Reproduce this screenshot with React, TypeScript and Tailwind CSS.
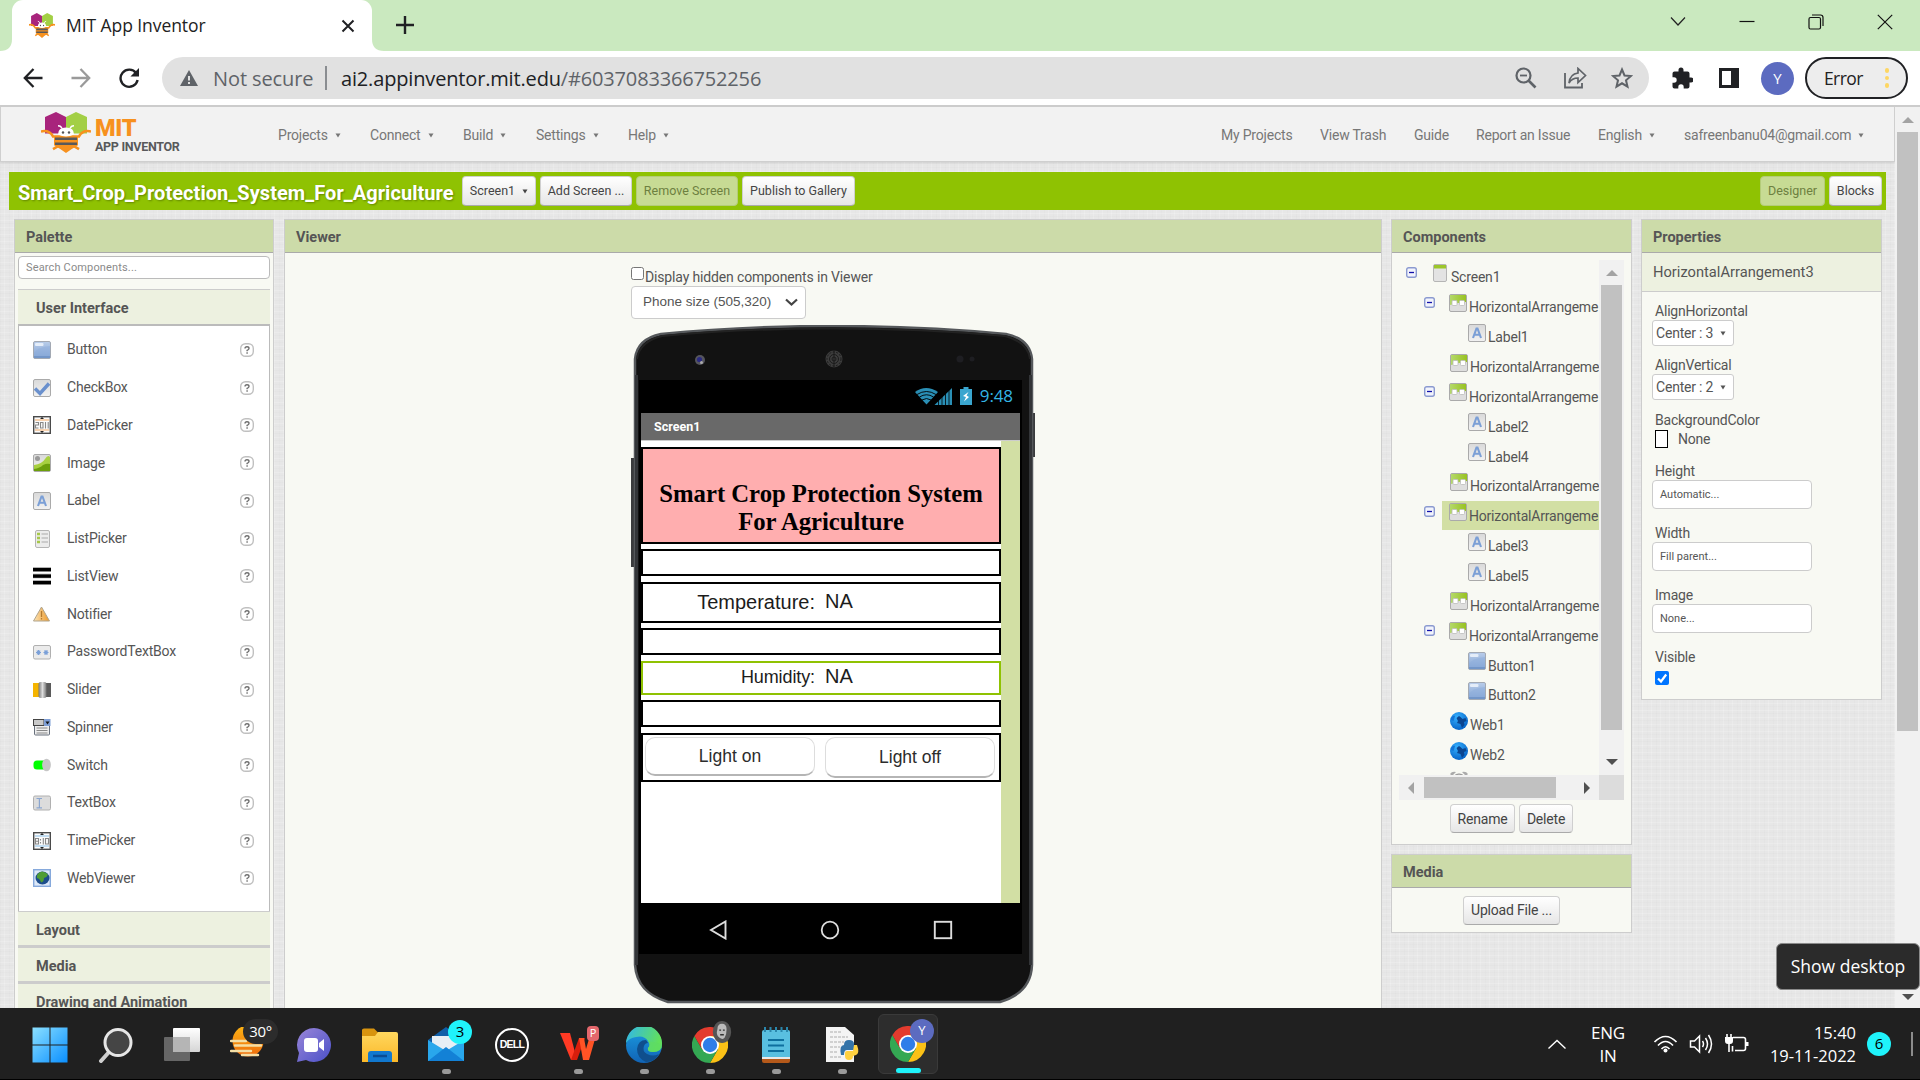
import type { ReactNode } from "react";

const ROBOTO = "font-['Roboto',sans-serif]";
const SEGOE = "font-['Open_Sans',sans-serif]";
const ARIAL = "font-['Liberation_Sans',sans-serif]";

/* ---------- Logos ---------- */

function BeeLogo({ className }: { className: string }) {
  return (
    <svg viewBox="0 0 50 42" preserveAspectRatio="none" className={className}>
      <path d="M4 5 15 0l10 5v17H4z" fill="#a8247c" />
      <path d="M46 5 35 0 25 5v17h21z" fill="#a3cf45" />
      <path d="M0 20q8-2 12 5h26q4-7 12-5M12 38l5-3h16l5 3" stroke="#f7911e" strokeWidth="2.6" fill="none" />
      <path d="M13 25h24v9q-7 4-12 8-5-4-12-8z" fill="#f7911e" />
      <path d="M14 27.5h22M14 32.5h22" stroke="#58595b" strokeWidth="2.6" />
      <path d="M17 23q0-7 8-7t8 7q-8 4-16 0z" fill="#fff" />
      <path d="M21 17q-1-3-4-3M29 17q1-3 4-3" stroke="#fff" strokeWidth="1.5" fill="none" />
      <circle cx="22" cy="21" r="1.2" fill="#555" />
      <circle cx="28" cy="21" r="1.2" fill="#555" />
    </svg>
  );
}

function ChromeLogo() {
  return (
    <svg viewBox="0 0 36 36" className="h-[36px] w-[36px]">
      <path d="M18 9h15.600A18 18 0 0 1 18 36l7.800-13.500z" fill="#fbc116" />
      <path d="M2.400 9A18 18 0 0 0 18 36l7.800-13.500L18 18l-7.800 4.500z" fill="#34a853" />
      <path d="M2.400 9a18 18 0 0 1 31.200 0H18l-7.800 13.500z" fill="#e33b2e" />
      <circle cx="18" cy="18" r="9" fill="#fff" />
      <circle cx="18" cy="18" r="7.2" fill="#2f7de9" />
    </svg>
  );
}

/* ---------- Component icons (18px) ---------- */

function Defs() {
  return (
    <svg className="absolute h-0 w-0">
      <defs>
        <linearGradient id="blue" x1="0" y1="0" x2="0" y2="1">
          <stop offset="0" stopColor="#b9cdea" />
          <stop offset="1" stopColor="#7fa1d3" />
        </linearGradient>
        <linearGradient id="grey" x1="0" y1="0" x2="0" y2="1">
          <stop offset="0" stopColor="#d9d9d9" />
          <stop offset="1" stopColor="#f2f2f2" />
        </linearGradient>
        <linearGradient id="green" x1="0" y1="0" x2="1" y2="0">
          <stop offset="0" stopColor="#b4d96a" />
          <stop offset="1" stopColor="#98c220" />
        </linearGradient>
        <linearGradient id="metal" x1="0" y1="0" x2="1" y2="0">
          <stop offset="0" stopColor="#777" />
          <stop offset=".5" stopColor="#ddd" />
          <stop offset="1" stopColor="#777" />
        </linearGradient>
        <linearGradient id="amber" x1="0" y1="0" x2="1" y2="0">
          <stop offset="0" stopColor="#fbe3b5" />
          <stop offset="1" stopColor="#ee9a2b" />
        </linearGradient>
        <radialGradient id="globe" cx=".4" cy=".3" r=".8">
          <stop offset="0" stopColor="#35b1ff" />
          <stop offset="1" stopColor="#0059c0" />
        </radialGradient>
        <linearGradient id="win" x1="0" y1="0" x2="1" y2="1">
          <stop offset="0" stopColor="#8be0ff" />
          <stop offset="1" stopColor="#0a8fff" />
        </linearGradient>
        <linearGradient id="edgeA" x1="0" y1="0" x2="1" y2="0.3">
          <stop offset="0" stopColor="#2fb5ee" />
          <stop offset="1" stopColor="#62e05c" />
        </linearGradient>
        <linearGradient id="edgeB" x1="0" y1="0" x2="0" y2="1">
          <stop offset="0" stopColor="#1b9de2" />
          <stop offset="1" stopColor="#1163b5" />
        </linearGradient>
        <linearGradient id="teams" x1="0" y1="0" x2="1" y2="1">
          <stop offset="0" stopColor="#9a86d8" />
          <stop offset="1" stopColor="#4a50c8" />
        </linearGradient>
        <linearGradient id="sun" x1="0" y1="0" x2="0" y2="1">
          <stop offset="0" stopColor="#fdb515" />
          <stop offset="1" stopColor="#ee6b0c" />
        </linearGradient>
        <linearGradient id="task" x1="0" y1="0" x2="0" y2="1">
          <stop offset="0" stopColor="#fff" />
          <stop offset="1" stopColor="#d5d5d5" />
        </linearGradient>
        <linearGradient id="folder" x1="0" y1="0" x2="0" y2="1">
          <stop offset="0" stopColor="#ffd75e" />
          <stop offset="1" stopColor="#fbb829" />
        </linearGradient>
      </defs>
    </svg>
  );
}

const frame = <rect x=".5" y=".5" width="17" height="17" rx="1.500" fill="url(#grey)" stroke="#aaa" />;

const icons: Record<string, ReactNode> = {
  Button: (
    <>
      <rect x=".5" y=".5" width="17" height="17" rx="1.5" fill="url(#blue)" stroke="#a3a9b3" />
      <rect x="2" y="2" width="8.500" height="3" rx="1" fill="#e4edf9" />
      <path d="M1 12Q5 6 17 5v10H1z" fill="#8eaedb" opacity=".5" />
      <path d="M1 16h16" stroke="#6f93c6" strokeWidth="1.6" />
    </>
  ),
  CheckBox: (
    <>
      {frame}
      <path d="M2 9.500 7 14.500 16 4.500" fill="none" stroke="#6a90cd" strokeWidth="3.4" />
    </>
  ),
  DatePicker: (
    <>
      <rect x=".7" y=".7" width="16.600" height="16.600" fill="#fbfbfb" stroke="#4a4a4a" strokeWidth="1.400" />
      <path d="M2 4h14M2 14h14" stroke="#f5c396" strokeWidth="1.600" />
      <path d="M9 1 7 3h4zM9 17l-2-2h4z" fill="#222" />
      <path d="M2.500 6.500h3v2.500h-3v3h3M7.500 6.500h2.500v5.500H7.500zM12.500 6v6.500M15.200 6v6.500" fill="none" stroke="#888" strokeWidth="1.100" />
    </>
  ),
  Image: (
    <>
      {frame}
      <path d="M1 11Q9 10 12 5t5-2v14H1z" fill="#a8d040" />
      <path d="M1 15q6-1 9-4 4-2 7-1v7H1z" fill="#6c9f0b" />
      <circle cx="4.500" cy="4.500" r="2.500" fill="#999" />
    </>
  ),
  Label: (
    <>
      {frame}
      <path d="M5 14 8.500 4.500h1L13 14M6.300 10.800h5.400" fill="none" stroke="#7b9fd6" strokeWidth="2.100" />
    </>
  ),
  ListPicker: (
    <>
      <rect x="2.500" y=".5" width="14" height="17" rx="1.500" fill="#ececec" stroke="#b5b5b5" />
      <path d="M4 4h3M4 8h3M4 12h3" stroke="#a6c84a" strokeWidth="2.300" />
      <path d="M8.500 4H15M8.500 8H15M8.500 12H15" stroke="#aaa" strokeWidth="1.100" />
    </>
  ),
  ListView: (
    <>
      <path d="M0 2.500h18M0 9h18M0 15.500h18" stroke="#999" strokeWidth="4.600" />
      <path d="M0 2.700h18M0 9.200h18M0 15.700h18" stroke="#000" strokeWidth="3.200" />
    </>
  ),
  Notifier: (
    <>
      <path d="M8.500 2 16.500 16h-16z" fill="url(#amber)" stroke="#b0a48c" strokeWidth="1" />
      <path d="M8.500 6v6M8.500 13v1.500" stroke="#b57b2f" strokeWidth="1.300" />
    </>
  ),
  PasswordTextBox: (
    <>
      <rect x=".5" y="2.500" width="17" height="13.500" rx="1.500" fill="#ebebeb" stroke="#b0b0b0" />
      <path d="M3 9.500h5M5.500 7v5M3.800 7.700l3.400 3.600M7.200 7.700l-3.400 3.600M10.500 9.500h5M13 7v5M11.300 7.700l3.400 3.600M14.700 7.700l-3.400 3.600" stroke="#7ba0d8" strokeWidth="1.100" />
    </>
  ),
  Slider: (
    <>
      <rect y="2" width="7" height="14" fill="#f5b400" />
      <rect x="12" y="2" width="6" height="14" fill="#5a5a5a" />
      <rect x="5.500" y="1" width="8" height="16" rx="2" fill="url(#metal)" />
    </>
  ),
  Spinner: (
    <>
      <rect x="1.500" y="6" width="15" height="11" rx="1" fill="#eee" stroke="#68707c" />
      <rect x=".5" y="1.500" width="10.500" height="6" fill="#c9c9c9" stroke="#444" />
      <rect x="11" y="1" width="6.500" height="7" fill="#7f9fd6" />
      <path d="M12.500 3.500h4l-2 3z" fill="#111" />
      <path d="M3.500 10h11M3.500 12.500h11M3.500 15h11" stroke="#888" />
    </>
  ),
  Switch: (
    <>
      <rect x=".5" y="4.500" width="14" height="9" rx="3.500" fill="#0f0" />
      <ellipse cx="13.500" cy="9" rx="4.400" ry="6.300" fill="#c6c6c6" />
    </>
  ),
  TextBox: (
    <>
      <rect x=".5" y="2" width="17" height="14" rx="1.500" fill="#dcdcdc" stroke="#b0b0b0" />
      <path d="M3.500 4.500H6L6.500 5 7 4.500h2M6.400 5v9M3.500 13.800H9" fill="none" stroke="#8aa5cf" strokeWidth="1.200" />
    </>
  ),
  TimePicker: (
    <>
      <rect x=".7" y=".7" width="16.600" height="16.600" fill="#fbfbfb" stroke="#4a4a4a" strokeWidth="1.400" />
      <path d="M2 4h14M2 14h14" stroke="#aed2ee" strokeWidth="1.600" />
      <path d="M9 1 7 3h4zM9 17l-2-2h4z" fill="#222" />
      <path d="M2.500 6.500h3v5.500h-3zM2.500 9.200h3M7.500 7v1.500M7.500 10v1.500M10.300 6v6.500M12.500 6.500h3v5.500h-3z" fill="none" stroke="#888" strokeWidth="1.100" />
    </>
  ),
  WebViewer: (
    <>
      <rect x=".7" y=".7" width="16.600" height="16.600" fill="#dce8f8" stroke="#86a9dc" strokeWidth="1.400" />
      <ellipse cx="9.500" cy="9" rx="7" ry="6.500" fill="#1d4d8c" />
      <path d="M4 9q-1-5 5-6.500 4 .5 6 3-1 3-4 3.500 0 4-3 4.500-1-4-4-4.500z" fill="#4f9d35" />
    </>
  ),
  Arrange: (
    <>
      <rect x=".5" y=".5" width="17" height="17" rx="1.500" fill="#dedede" stroke="#aaa" />
      <path d="M1 1h16v7Q9 8.500 1 11z" fill="url(#green)" />
      <rect x="3" y="6.500" width="5" height="5" rx="1" fill="#fff" stroke="#bbb" strokeWidth=".8" />
      <rect x="10.500" y="6.500" width="5" height="5" rx="1" fill="#fff" stroke="#bbb" strokeWidth=".8" />
    </>
  ),
  Screen: (
    <>
      <rect x="2.500" y=".5" width="13" height="17" rx="1.500" fill="#e3e3e3" stroke="#b5b5b5" />
      <path d="M3 1h12v3.500H3z" fill="#9cc62b" />
    </>
  ),
  Web: (
    <>
      <circle cx="9" cy="9" r="9" fill="url(#globe)" />
      <path d="M9 4 6.500 6 8 9l-1 2 3.500 1 1.500 4 2.500-3-.5-3 2.500-1-1-3-3 1-2-2z" fill="#0b4590" />
      <path d="M1 6q2-3 4-2L3.500 9 1 8z" fill="#1273d6" />
    </>
  ),
};

function Icon({ name }: { name: string }) {
  return (
    <svg viewBox="0 0 18 18" className="h-[18px] w-[18px] shrink-0">
      {icons[name]}
    </svg>
  );
}

function HelpIcon() {
  return (
    <svg viewBox="0 0 14 14" className="h-[14px] w-[14px]">
      <rect x=".7" y=".7" width="12.600" height="12.600" rx="4.800" fill="#fff" stroke="#c0c0c0" strokeWidth="1.400" />
      <path d="M5 5.600q0-1.900 2-1.900t2 1.700q0 1-1.900 2v.8M7.100 9.300v1.400" fill="none" stroke="#707070" strokeWidth="1.400" />
    </svg>
  );
}

function Caret({ className = "" }: { className?: string }) {
  return (
    <svg viewBox="0 0 6 6" className={`h-[5px] w-[6px] shrink-0 ${className}`}>
      <path d="M0 .5h6L3 5.500z" fill="currentColor" />
    </svg>
  );
}

function Arrow({ dir, dark }: { dir: "up" | "down" | "left" | "right"; dark?: boolean }) {
  const d = { up: "M0 9h12L6 3z", down: "M0 3h12L6 9z", left: "M9 0v12L3 6z", right: "M3 0v12l6-6z" }[dir];
  return (
    <svg viewBox="0 0 12 12" className="h-[12px] w-[12px]">
      <path d={d} fill={dark ? "#505050" : "#a3a3a3"} />
    </svg>
  );
}

/* ---------- Browser chrome ---------- */

function TabStrip() {
  return (
    <div className="flex h-[51px] shrink-0 bg-[#cae9bf]">
      <svg viewBox="0 0 12 12" className="mt-[39px] h-[12px] w-[12px]">
        <path d="M12 0v12H0Q12 12 12 0z" fill="#fff" />
      </svg>
      <div className="flex h-[51px] w-[360px] items-center rounded-t-[11px] bg-white pl-[17px]">
        <BeeLogo className="h-[25px] w-[26px]" />
        <span className={`${SEGOE} ml-[11px] w-[275px] text-[17.500px] tracking-[-0.07px] text-[#222]`}>MIT App Inventor</span>
        <svg viewBox="0 0 14 14" className="h-[14px] w-[14px] shrink-0">
          <path d="m1.500 1.500 11 11m0-11-11 11" stroke="#202124" strokeWidth="2" />
        </svg>
      </div>
      <svg viewBox="0 0 12 12" className="mt-[39px] h-[12px] w-[12px]">
        <path d="M0 0v12h12Q0 12 0 0z" fill="#fff" />
      </svg>
      <svg viewBox="0 0 18 18" className="ml-[12px] mt-[16px] h-[18px] w-[18px]">
        <path d="M9 0v18M0 9h18" stroke="#202124" strokeWidth="2.400" />
      </svg>
      <div className="ml-auto flex items-start pr-[27px] pt-[14px]">
        <svg viewBox="0 0 16 16" className="mr-[53px] h-[16px] w-[16px]">
          <path d="m1 3.500 7 7.500 7-7.500" fill="none" stroke="#222" strokeWidth="1.200" />
        </svg>
        <svg viewBox="0 0 16 16" className="mr-[53px] h-[16px] w-[16px]">
          <path d="M.5 7.500h15" stroke="#111" strokeWidth="1.200" />
        </svg>
        <svg viewBox="0 0 16 16" className="mr-[53px] h-[16px] w-[16px]">
          <rect x="1" y="3.500" width="11.500" height="11.500" rx="1.500" fill="none" stroke="#111" strokeWidth="1.200" />
          <path d="M4 1h8.500Q15 1 15 3.500V12" fill="none" stroke="#111" strokeWidth="1.200" />
        </svg>
        <svg viewBox="0 0 16 16" className="h-[16px] w-[16px]">
          <path d="m.8.800 14.400 14.400m0-14.400L.8 15.200" stroke="#111" strokeWidth="1.200" />
        </svg>
      </div>
    </div>
  );
}

function Toolbar() {
  return (
    <div className="flex h-[54px] shrink-0 items-center bg-white pl-[23px]">
      <svg viewBox="0 0 20 20" className="h-[20px] w-[20px]">
        <path d="M19.500 10H2M10.500 1 1.800 10l8.700 9" fill="none" stroke="#202124" strokeWidth="2.300" />
      </svg>
      <svg viewBox="0 0 20 20" className="ml-[28px] h-[20px] w-[20px]">
        <path d="M.5 10H18M9.500 1l8.700 9-8.700 9" fill="none" stroke="#9a9a9a" strokeWidth="2.300" />
      </svg>
      <svg viewBox="0 0 22 22" className="ml-[27px] h-[21px] w-[22px]">
        <path d="M18.500 5.500A9 9 0 1 0 20 12.500" fill="none" stroke="#202124" strokeWidth="2.500" />
        <path d="M21.500 0v9h-9z" fill="#202124" />
      </svg>
      <div className={`${SEGOE} ml-[22px] flex h-[42px] w-[1487px] items-center rounded-full bg-[#e1e1e1] pl-[18px] pr-[16px] text-[20px]`}>
        <svg viewBox="0 0 18 16" className="h-[16px] w-[18px]">
          <path d="M9 0 18 16H0z" fill="#5f6368" />
          <path d="M9 6v4.500M9 12v2" stroke="#e1e1e1" strokeWidth="2" />
        </svg>
        <span className="ml-[15px] w-[112px] whitespace-nowrap pt-[2px] tracking-[-0.1px] text-[#5f6368]">Not secure</span>
        <span className="h-[24px] w-[2px] bg-[#8a8d91]" />
        <span className="ml-[14px] whitespace-nowrap pt-[2px] tracking-[-0.16px] text-[#202124]">
          ai2.appinventor.mit.edu<span className="text-[#5f6368]">/#6037083366752256</span>
        </span>
        <svg viewBox="0 0 22 22" className="ml-auto h-[22px] w-[22px]">
          <circle cx="8.500" cy="8.500" r="7" fill="none" stroke="#5f6368" strokeWidth="2.200" />
          <path d="m13.500 13.500 7 7" stroke="#5f6368" strokeWidth="2.600" />
          <path d="M5 8.500h7" stroke="#5f6368" strokeWidth="1.800" />
        </svg>
        <svg viewBox="0 0 24 22" className="ml-[26px] h-[22px] w-[24px]">
          <path d="M2 6v14.500h17V16" fill="none" stroke="#5f6368" strokeWidth="1.800" />
          <path d="M6 16Q7 7 15 6V1.500l7.500 7-7.500 7V11Q9 11 6 16z" fill="none" stroke="#5f6368" strokeWidth="1.700" />
        </svg>
        <svg viewBox="0 0 22 22" className="ml-[24px] h-[22px] w-[22px]">
          <path d="m11 2.500 2.500 6 6.500.5-5 4.300 1.500 6.400L11 16.300l-5.500 3.400L7 13.300 2 9l6.500-.5z" fill="none" stroke="#5f6368" strokeWidth="2" />
        </svg>
      </div>
      <svg viewBox="0 0 22 22" className="ml-[22px] h-[22px] w-[22px]">
        <path d="M20 10.500h-1.500V6.500q0-2-2-2h-4V3a2.500 2.500 0 0 0-5 0v1.500h-4q-2 0-2 2v3.800H3a2.700 2.700 0 0 1 0 5.400H1.500v3.800q0 2 2 2h3.800V20a2.700 2.700 0 0 1 5.400 0v1.500h3.800q2 0 2-2v-4H20a2.500 2.500 0 0 0 0-5z" fill="#202124" />
      </svg>
      <svg viewBox="0 0 22 22" className="ml-[25px] h-[22px] w-[22px]">
        <path d="M1 1h20v20H1zM4 4v14h9V4z" fill="#202124" fillRule="evenodd" />
      </svg>
      <span className={`${SEGOE} ml-[21px] flex h-[33px] w-[33px] items-center justify-center rounded-full bg-[#5c6bc0] text-[15px] text-white`}>Y</span>
      <div className={`${SEGOE} ml-[11px] flex h-[42px] w-[103px] items-center rounded-full border-2 border-[#202124] bg-[#ededed] pl-[17px] text-[17.500px] tracking-[-0.6px] text-[#222]`}>
        Error
        <span className="ml-auto mr-[17px] flex flex-col gap-[3px]">
          <i className="h-[4.500px] w-[4.500px] rounded-full bg-[#fdd663]" />
          <i className="h-[4.500px] w-[4.500px] rounded-full bg-[#fdd663]" />
          <i className="h-[4.500px] w-[4.500px] rounded-full bg-[#fdd663]" />
        </span>
      </div>
    </div>
  );
}

/* ---------- App Inventor header ---------- */

function MenuItem({ label, className, caret = true }: { label: string; className: string; caret?: boolean }) {
  return (
    <span className={`flex shrink-0 items-center whitespace-nowrap pt-[2px] ${className}`}>
      {label}
      {caret && <Caret className="ml-[7px]" />}
    </span>
  );
}

function Header() {
  return (
    <header className={`${ROBOTO} flex h-[55px] shrink-0 items-center border border-t-0 border-[#cfcfcf] bg-[#f2f2f2] pl-[40px] text-[14px] tracking-[-0.2px] text-[#777] shadow-[0_1px_3px_rgba(0,0,0,0.12)]`}>
      <BeeLogo className="mt-[-3px] h-[41px] w-[50px]" />
      <div className="ml-[4px] flex w-[183px] flex-col">
        <b className="text-[23.500px] font-black leading-[24px] tracking-[-0.3px] text-[#f7911e]">MIT</b>
        <b className="text-[12.500px] leading-[13px] tracking-[-0.3px] text-[#58595b]">APP INVENTOR</b>
      </div>
      <MenuItem label="Projects" className="w-[92px]" />
      <MenuItem label="Connect" className="w-[93px]" />
      <MenuItem label="Build" className="w-[73px]" />
      <MenuItem label="Settings" className="w-[92px]" />
      <MenuItem label="Help" className="w-[593px]" />
      <MenuItem label="My Projects" className="w-[99px]" caret={false} />
      <MenuItem label="View Trash" className="w-[94px]" caret={false} />
      <MenuItem label="Guide" className="w-[62px]" caret={false} />
      <MenuItem label="Report an Issue" className="w-[122px]" caret={false} />
      <MenuItem label="English" className="w-[86px]" />
      <MenuItem label="safreenbanu04@gmail.com" className="" />
    </header>
  );
}

const whiteBtn =
  "rounded-[4px] border border-[#cfcfcf] border-b-[#aaa] bg-linear-to-b from-white to-[#e6e6e6] text-[#444] flex items-center justify-center whitespace-nowrap shrink-0";
const offBtn =
  "rounded-[4px] border border-[#b4cc78] bg-[#c7db94] text-[#6d8040] flex items-center justify-center whitespace-nowrap shrink-0";

function ProjectBar() {
  return (
    <div className={`${ROBOTO} ml-[9px] mt-[10px] flex h-[38px] w-[1877px] shrink-0 items-center bg-[#8fc202] pl-[9px] pr-[4px] text-[12.500px]`}>
      <b className="w-[444px] whitespace-nowrap pt-[3px] text-[20px] tracking-[0.06px] text-white [text-shadow:1px_1px_2px_rgba(0,0,0,0.3)]">
        Smart_Crop_Protection_System_For_Agriculture
      </b>
      <div className={`${whiteBtn} h-[30px] w-[74px]`}>
        Screen1
        <Caret className="ml-[7px]" />
      </div>
      <div className={`${whiteBtn} ml-[4px] h-[30px] w-[92px]`}>Add Screen ...</div>
      <div className={`${offBtn} ml-[4px] h-[30px] w-[102px]`}>Remove Screen</div>
      <div className={`${whiteBtn} ml-[4px] h-[30px] w-[113px]`}>Publish to Gallery</div>
      <div className={`${offBtn} ml-auto h-[30px] w-[65px]`}>Designer</div>
      <div className={`${whiteBtn} ml-[4px] h-[30px] w-[53px]`}>Blocks</div>
    </div>
  );
}

/* ---------- Panels ---------- */

function Panel({ title, className, children }: { title: string; className: string; children: ReactNode }) {
  return (
    <section className={`shrink-0 border border-[#cdcdcd] bg-[#f8f9f3] ${className}`}>
      <h2 className="flex h-[33px] items-center border-b border-[#aaa] bg-[#ccdba9] pl-[11px] pt-[3px] text-[14.500px] font-bold text-[#555]">{title}</h2>
      {children}
    </section>
  );
}

const palette = [
  "Button", "CheckBox", "DatePicker", "Image", "Label", "ListPicker", "ListView", "Notifier",
  "PasswordTextBox", "Slider", "Spinner", "Switch", "TextBox", "TimePicker", "WebViewer",
];

function PalettePanel() {
  return (
    <Panel title="Palette" className="ml-[14px] h-[800px] w-[260px]">
      <div className="mx-[3px] text-[14px] tracking-[-0.2px] text-[#555]">
        <div className="mt-[3px] flex h-[23px] items-center rounded-[4px] border border-[#bbb] bg-white pl-[7px] pt-[2px] text-[11px] tracking-[0.15px] text-[#8a8a8a]">
          Search Components...
        </div>
        <div className="mt-[10px] flex h-[37px] items-center border-b-2 border-t border-b-[#bbb] border-t-[#ccc] bg-[#edf1e0] pl-[18px] pt-[4px] text-[14.500px] font-bold tracking-normal">
          User Interface
        </div>
        <div className="h-[585px] border-x border-[#bbb] bg-white pt-[5px]">
          {palette.map((name) => (
            <div key={name} className="flex h-[37.760px] items-center pl-[14px] pr-[15px]">
              <Icon name={name} />
              <span className="ml-[16px]">{name}</span>
              <span className="ml-auto">
                <HelpIcon />
              </span>
            </div>
          ))}
        </div>
        {["Layout", "Media", "Drawing and Animation"].map((name) => (
          <div key={name} className="flex h-[36px] items-center border-b-2 border-t border-b-[#ccc] border-t-[#ccc] bg-[#edf1e0] pl-[18px] pt-[4px] text-[14.500px] font-bold tracking-normal">
            {name}
          </div>
        ))}
      </div>
    </Panel>
  );
}

function PhoneBody() {
  return (
    <svg viewBox="0 0 404 680" className="absolute left-0 top-0 h-[680px] w-[404px]">
      <rect x="0" y="133" width="6" height="109" fill="#3a3b3d" />
      <rect x="398" y="88" width="6" height="44" fill="#3a3b3d" />
      <path d="M4 34Q6 14 30 9 110 1 201 1t174 8q24 5 26 25v606q-1 28-32 37H37Q6 668 4 640z" fill="#121212" stroke="#55585b" strokeWidth="2.500" />
      <path d="M6 34Q8 17 31 11 110 3.500 201 3.500t173 7.500q23 6 25 23" fill="none" stroke="#222" strokeWidth="2" />
      <path d="M5.500 50v590M399.500 50v590" stroke="#333538" strokeWidth="3" />
      <circle cx="69" cy="35" r="5" fill="#55555d" />
      <circle cx="68.500" cy="34.500" r="2.600" fill="#2a2a80" />
      <circle cx="70.500" cy="37.500" r="1.500" fill="#aaa" />
      <circle cx="203" cy="34" r="8.500" fill="#3c3c3c" />
      <g fill="none" stroke="#1b1b1b" strokeWidth="1">
        <circle cx="203" cy="34" r="2" />
        <circle cx="203" cy="34" r="4.500" />
        <circle cx="203" cy="34" r="7" strokeDasharray="2 1.500" />
        <path d="M203 25v18" />
      </g>
      <circle cx="329" cy="34" r="3.500" fill="#1e1e22" />
      <circle cx="341" cy="34" r="2.500" fill="#1e1e22" />
    </svg>
  );
}

function PhoneScreen() {
  return (
    <div className="relative ml-[8px] mt-[55px] flex h-[574px] w-[383px] flex-col bg-black">
      <div className={`${SEGOE} flex h-[33px] shrink-0 items-center justify-end pr-[9px] pb-[2px] text-[17px] tracking-[-0.1px] text-[#33b5e5]`}>
        <svg viewBox="0 0 38 18" className="h-[18px] w-[38px]">
          <path d="M0 5Q11-3 23 5L11.500 17.500z" fill="#2a8fb5" />
          <path d="M2 7.500q9.500-6 19 0M4.500 10q7-4.500 14 0M7 13q4.500-3 9 0" fill="none" stroke="#000" strokeWidth=".9" />
          <path d="M37 1v17H19.500z" fill="#2a8fb5" />
          <path d="M23.500 10v8M27 8v10M30.500 4v14M34 2v16" stroke="#000" strokeWidth=".8" />
        </svg>
        <svg viewBox="0 0 12 18" className="ml-[7px] h-[18px] w-[12px]">
          <path d="M0 2h3.500V0h5v2H12v16H0z" fill="#3aa6cf" />
          <path d="M8.500 5 3 9l3 1-2 4.500L9 10 6.500 8.500z" fill="#fff" />
        </svg>
        <span className="ml-[8px]">9:48</span>
      </div>
      <b className={`${ROBOTO} mx-[2px] flex h-[28px] shrink-0 items-center border-b border-[#ccc] bg-[#696969] pl-[13px] pt-px text-[12.500px] text-white`}>
        Screen1
      </b>
      <div className="mx-[2px] flex h-[462px] shrink-0 bg-[#d2dfa4]">
        <div className={`${ARIAL} flex w-[360px] flex-col bg-white pt-[6px] text-[#1c1c1c]`}>
          <div className="flex h-[97px] items-end justify-center border-2 border-black bg-[#ffaeaf] pb-[6px] text-center font-['Liberation_Serif',serif] text-[24.700px] font-bold leading-[28px] text-black">
            <span>
              Smart Crop Protection System
              <br />
              For Agriculture
            </span>
          </div>
          <div className="mt-[5px] h-[27px] border-2 border-black" />
          <div className="mt-[6px] flex h-[41px] border-2 border-black">
            <span className="w-[172px] pt-[3px] text-right text-[20px]">Temperature:</span>
            <span className="ml-[10px] pt-[2px] text-[20px]">NA</span>
          </div>
          <div className="mt-[5px] h-[27px] border-2 border-black" />
          <div className="mt-[6px] flex h-[34px] border-2 border-[#8fc202]">
            <span className="w-[172px] pt-px text-right text-[18px] tracking-[-0.1px]">Humidity:</span>
            <span className="ml-[10px] mt-[-2px] text-[20px]">NA</span>
          </div>
          <div className="mt-[5px] h-[27px] border-2 border-black" />
          <div className="mt-[6px] flex h-[49px] items-start border-2 border-black pl-[2px] pt-[2px] text-[17.500px] text-[#2c2c2c]">
            <div className="flex h-[39px] w-[170px] items-center justify-center rounded-[10px] border border-b-2 border-[#ddd] border-b-[#b5b5b5]">Light on</div>
            <div className="ml-[10px] flex h-[41px] w-[170px] items-center justify-center rounded-[10px] border border-b-2 border-[#ddd] border-b-[#b5b5b5]">Light off</div>
          </div>
        </div>
      </div>
      <div className="flex h-[51px] items-center pl-[70px] pt-[2px]">
        <svg viewBox="0 0 18 20" className="h-[20px] w-[18px]">
          <path d="M16.500 1.500v17L2 10z" fill="none" stroke="#ddd" strokeWidth="1.900" />
        </svg>
        <svg viewBox="0 0 20 20" className="ml-[93px] h-[20px] w-[20px]">
          <circle cx="10" cy="10" r="8.300" fill="none" stroke="#ddd" strokeWidth="1.800" />
        </svg>
        <svg viewBox="0 0 20 20" className="ml-[93px] h-[20px] w-[20px]">
          <rect x="1.800" y="1.800" width="16.400" height="16.400" fill="none" stroke="#ddd" strokeWidth="1.900" />
        </svg>
      </div>
    </div>
  );
}

function ViewerPanel() {
  return (
    <Panel title="Viewer" className="ml-[10px] h-[800px] w-[1098px]">
      <div className="pl-[346px]">
        <div className="mt-[14px] flex h-[19px] text-[14px] tracking-[-0.15px] text-[#555]">
          <span className="h-[13px] w-[13px] rounded-[2.500px] border border-[#767676] bg-white" />
          <span className="ml-[1px] whitespace-nowrap">Display hidden components in Viewer</span>
        </div>
        <div className={`${ARIAL} flex h-[33px] w-[175px] items-center rounded-[4px] border border-[#ccc] bg-white pl-[11px] pr-[7px] text-[13.500px] text-[#555]`}>
          Phone size (505,320)
          <svg viewBox="0 0 13 9" className="ml-auto h-[9px] w-[13px]">
            <path d="m1 1.500 5.500 5 5.500-5" fill="none" stroke="#444" strokeWidth="2.200" />
          </svg>
        </div>
        <div className="relative mt-[6px] flex h-[680px] w-[404px]">
          <PhoneBody />
          <PhoneScreen />
        </div>
      </div>
    </Panel>
  );
}

type Row = { icon: string; label: string; open?: boolean; level: number; selected?: boolean };
const HA = "HorizontalArrangeme";
const tree: Row[] = [
  { icon: "Screen", label: "Screen1", open: true, level: 0 },
  { icon: "Arrange", label: HA, open: true, level: 1 },
  { icon: "Label", label: "Label1", level: 2 },
  { icon: "Arrange", label: HA, level: 1 },
  { icon: "Arrange", label: HA, open: true, level: 1 },
  { icon: "Label", label: "Label2", level: 2 },
  { icon: "Label", label: "Label4", level: 2 },
  { icon: "Arrange", label: HA, level: 1 },
  { icon: "Arrange", label: HA, open: true, level: 1, selected: true },
  { icon: "Label", label: "Label3", level: 2 },
  { icon: "Label", label: "Label5", level: 2 },
  { icon: "Arrange", label: HA, level: 1 },
  { icon: "Arrange", label: HA, open: true, level: 1 },
  { icon: "Button", label: "Button1", level: 2 },
  { icon: "Button", label: "Button2", level: 2 },
  { icon: "Web", label: "Web1", level: 1 },
  { icon: "Web", label: "Web2", level: 1 },
];

const gutter = ["w-[25px]", "w-[43px]", "w-[62px]"];

function TreeRow({ row }: { row: Row }) {
  return (
    <div className="flex h-[29.870px] items-center whitespace-nowrap">
      <span className={`flex shrink-0 justify-end pb-[9px] pr-[7px] ${gutter[row.level]}`}>
        {row.open && (
          <svg viewBox="0 0 11 11" className="h-[11px] w-[11px]">
            <rect x=".7" y=".7" width="9.600" height="9.600" rx="2" fill="#f2f4fc" stroke="#8b9ad0" strokeWidth="1.400" />
            <path d="M3 5.500h5" stroke="#11a" strokeWidth="1.300" />
          </svg>
        )}
      </span>
      <span className={`flex h-[29px] flex-1 items-center pl-[7px] ${row.selected ? "bg-[#d2dfa4]" : ""}`}>
        <span className={`flex pb-[8px] ${row.level === 1 && !row.open ? "pl-px" : ""}`}>
          <Icon name={row.icon} />
        </span>
        <span className={row.level === 0 ? "ml-[2px] pt-[2px]" : "ml-[2px] pt-[2px]"}>{row.label}</span>
      </span>
    </div>
  );
}

function ComponentsColumn() {
  return (
    <div className="ml-[9px] flex w-[241px] shrink-0 flex-col">
      <Panel title="Components" className="h-[626px] w-[241px]">
        <div className="ml-[7px] mt-[7px] flex h-[515px] text-[14px] tracking-[-0.2px] text-[#555]">
          <div className="h-[515px] w-[200px] overflow-hidden pt-[2px]">
            {tree.map((row, i) => (
              <TreeRow key={i} row={row} />
            ))}
            <svg viewBox="0 0 18 18" className="ml-[51px] mt-[1px] h-[18px] w-[18px]">
              <path d="M0 3q2-3 6-2L2 5zM18 3q-2-3-6-2l4 4z" fill="#aaa" />
              <circle cx="9" cy="10" r="7" fill="#ddd" stroke="#888" />
            </svg>
          </div>
          <div className="flex w-[25px] flex-col items-center bg-[#f1f1f1] pb-[7px] pt-[7px]">
            <Arrow dir="up" />
            <div className="mt-[6px] h-[445px] w-[21px] bg-[#c1c1c1]" />
            <span className="mt-auto">
              <Arrow dir="down" dark />
            </span>
          </div>
        </div>
        <div className="ml-[7px] flex h-[25px]">
          <div className="flex w-[200px] items-center bg-[#f1f1f1] pl-[6px] pr-[6px]">
            <Arrow dir="left" />
            <div className="ml-[7px] h-[21px] w-[132px] bg-[#c1c1c1]" />
            <span className="ml-auto">
              <Arrow dir="right" dark />
            </span>
          </div>
          <div className="w-[25px] bg-[#dcdcdc]" />
        </div>
        <div className="flex pl-[58px] pt-[4px] text-[14px] tracking-[-0.2px]">
          <div className={`${whiteBtn} h-[29px] w-[65px] pt-px`}>Rename</div>
          <div className={`${whiteBtn} ml-[4px] h-[29px] w-[54px] pt-px`}>Delete</div>
        </div>
      </Panel>
      <Panel title="Media" className="mt-[9px] h-[79px] w-[241px]">
        <div className="flex justify-center pt-[8px] text-[14px] tracking-[-0.2px]">
          <div className={`${whiteBtn} h-[29px] w-[97px]`}>Upload File ...</div>
        </div>
      </Panel>
    </div>
  );
}

function SelectField({ label, value, className }: { label: string; value: string; className: string }) {
  return (
    <div className={className}>
      <div className="pl-[3px] leading-[18px]">{label}</div>
      <div className="flex h-[26px] w-[82px] items-center rounded-[3px] border border-[#ccc] bg-white pl-[3px]">
        {value}
        <Caret className="ml-[7px]" />
      </div>
    </div>
  );
}

function InputField({ label, value }: { label: string; value: string }) {
  return (
    <div className="h-[62px]">
      <div className="pl-[3px] leading-[18px]">{label}</div>
      <div className="flex h-[29px] w-[160px] items-center rounded-[4px] border border-[#ccc] bg-white pl-[7px] pt-[2px] text-[11px] tracking-normal">
        {value}
      </div>
    </div>
  );
}

function PropertiesPanel() {
  return (
    <Panel title="Properties" className="ml-[9px] h-[481px] w-[241px]">
      <div className="flex h-[39px] items-center border-b border-[#ccc] bg-[#edf1e0] pl-[11px] pt-px text-[14.700px] text-[#555]">HorizontalArrangement3</div>
      <div className="pl-[10px] text-[14px] tracking-[-0.2px] text-[#555]">
        <SelectField label="AlignHorizontal" value="Center : 3" className="mt-[10px] h-[54px]" />
        <SelectField label="AlignVertical" value="Center : 2" className="h-[55px]" />
        <div className="h-[51px]">
          <div className="pl-[3px] leading-[19px]">BackgroundColor</div>
          <div className="flex items-center pl-[3px] leading-[18px]">
            <span className="mr-[10px] h-[18px] w-[13px] border border-black bg-white" />
            None
          </div>
        </div>
        <InputField label="Height" value="Automatic..." />
        <InputField label="Width" value="Fill parent..." />
        <InputField label="Image" value="None..." />
        <div className="pl-[3px]">
          <div className="leading-[18px]">Visible</div>
          <svg viewBox="0 0 14 14" className="mt-[5px] h-[14px] w-[14px]">
            <rect width="14" height="14" rx="2" fill="#0075ff" />
            <path d="m3 7.500 3 3L11.200 3.500" fill="none" stroke="#fff" strokeWidth="2.200" />
          </svg>
        </div>
      </div>
    </Panel>
  );
}

/* ---------- Taskbar ---------- */

function TaskIcon({ children, dot }: { children: ReactNode; dot?: boolean }) {
  return (
    <div className="relative flex h-[72px] w-[66px] shrink-0 items-center justify-center pt-[2px]">
      {children}
      {dot && <span className="absolute bottom-[6px] left-[28.500px] h-[5px] w-[9px] rounded-full bg-[#9a9a9a]" />}
    </div>
  );
}

const svg36 = "h-[36px] w-[36px]";

function Taskbar() {
  return (
    <div className={`${SEGOE} flex h-[72px] shrink-0 items-center border-b border-black bg-[#202020] pl-[17px] text-white`}>
      <TaskIcon>
        <svg viewBox="0 0 36 36" className={svg36}>
          <path d="M.5.500h17v17H.5zM18.500.500h17v17h-17zM.5 18.500h17v17H.5zM18.500 18.500h17v17h-17z" fill="url(#win)" />
        </svg>
      </TaskIcon>
      <TaskIcon>
        <svg viewBox="0 0 36 36" className={svg36}>
          <path d="M11.500 24.500 3 34" stroke="#cfcfcf" strokeWidth="4" strokeLinecap="round" />
          <circle cx="20" cy="15.500" r="13" fill="#454545" stroke="#e6e6e6" strokeWidth="3" />
        </svg>
      </TaskIcon>
      <TaskIcon>
        <svg viewBox="0 0 36 36" className={svg36}>
          <rect x="0" y="10" width="26" height="24" rx="1" fill="#666" />
          <rect x="9" y="1" width="27" height="24" rx="1" fill="url(#task)" />
          <path d="M9 10h17v15H9z" fill="#b5b5b5" />
        </svg>
      </TaskIcon>
      <TaskIcon>
        <svg viewBox="0 0 36 36" className={svg36}>
          <circle cx="18" cy="14" r="15.500" fill="url(#sun)" />
          <path d="M1 14h15M5 18.500h26M1 24h20M12 28h16" stroke="#f5dfa5" strokeWidth="2.400" strokeLinecap="round" />
        </svg>
        <span className="absolute left-[28px] top-[11px] flex h-[25px] w-[35px] items-center justify-center rounded-full bg-[#2c2c2c] text-[15px] tracking-[-0.4px]">30°</span>
      </TaskIcon>
      <TaskIcon>
        <svg viewBox="0 0 36 36" className={svg36}>
          <path d="M18 1a17 17 0 1 1-8 32L1 35l2-9A17 17 0 0 1 18 1z" fill="url(#teams)" />
          <rect x="8" y="11" width="14" height="14" rx="3" fill="#fff" />
          <path d="m23 16 5-4v12l-5-4z" fill="#fff" />
        </svg>
      </TaskIcon>
      <TaskIcon>
        <svg viewBox="0 0 36 36" className={svg36}>
          <path d="M0 3q0-1.500 2-1.500h10l4 4H30v8H0z" fill="#d8940f" />
          <path d="M0 9h13l3-4h18q2 0 2 2v28H0z" fill="url(#folder)" />
          <path d="M6 35V27q0-3 3-3h18q3 0 3 3v8z" fill="#1178cf" />
          <path d="M11 29h14" stroke="#0a4c94" strokeWidth="2.500" />
        </svg>
      </TaskIcon>
      <TaskIcon dot>
        <svg viewBox="0 0 36 36" className={svg36}>
          <path d="M0 13 18 0l18 13v5H0z" fill="#0f5ea8" />
          <path d="M4 9h28v14L18 26 4 22z" fill="#e6eef5" />
          <path d="M0 13v21h36V13L18 24z" fill="#29a7ec" />
          <path d="m0 34 18-14 18 14z" fill="#1381d6" />
        </svg>
        <span className="absolute left-[35px] top-[12px] flex h-[24px] w-[24px] items-center justify-center rounded-full bg-[#1ff3fb] text-[15px] text-black">3</span>
      </TaskIcon>
      <TaskIcon>
        <span className={`${ARIAL} flex h-[34px] w-[34px] items-center justify-center rounded-full border-2 border-white text-[10.500px] font-bold tracking-[-0.7px]`}>DELL</span>
      </TaskIcon>
      <TaskIcon dot>
        <svg viewBox="0 0 40 36" className="h-[36px] w-[40px]">
          <path d="M2 6h10l7 27h-6z" fill="#ff3a24" />
          <path d="m13 33 8-22h6l-8 22z" fill="#d81e0c" />
          <path d="m21 11 4 22h6L37 12h-6l-3 10-2-11z" fill="#ff5325" />
        </svg>
        <span className="absolute left-[42px] top-[18px] flex h-[15px] w-[12px] items-center justify-center rounded-[4px] bg-[#e4676c] text-[11px]">P</span>
      </TaskIcon>
      <TaskIcon dot>
        <svg viewBox="0 0 36 36" className={svg36}>
          <circle cx="18" cy="18" r="18" fill="url(#edgeB)" />
          <path d="M0 16A18 18 0 0 1 36 17q0 8-9 8-6 0-5-4 3-3 0-7-4-6-12-4Q3 11 0 16z" fill="url(#edgeA)" />
          <path d="M20 13q-8 0-9 9 0 9 9 13 9 0 13-8-6 3-12 0-5-3-3-8 1-3 4-3z" fill="#0f4f8d" />
          <path d="M36 17q0 8-9 8-6 0-5-4 3-3 0-7z" fill="#5edb63" opacity=".7" />
        </svg>
      </TaskIcon>
      <TaskIcon dot>
        <ChromeLogo />
        <svg viewBox="0 0 24 24" className="absolute left-[34px] top-[12px] h-[24px] w-[22px]">
          <ellipse cx="12" cy="12" rx="10" ry="12" fill="#555" />
          <path d="M7 9q0-6 5-6t5 6-2 9-6 0-2-9z" fill="#bbb" />
          <path d="M9 10h2M13 10h2M10 15h4" stroke="#333" strokeWidth="1.500" />
        </svg>
      </TaskIcon>
      <TaskIcon dot>
        <svg viewBox="0 0 30 36" className="h-[36px] w-[30px]">
          <rect x="1" y="3" width="28" height="29" rx="2" fill="#59bfe0" />
          <path d="M1 31h28v3q0 2-2 2H3q-2 0-2-2z" fill="#b5591a" />
          <path d="M1 30h28v2H1z" fill="#e8e8e8" />
          <path d="M7 13h16M7 18.500h16M7 24h16" stroke="#0e6f9e" strokeWidth="2.200" />
          <path d="M4 0v5M9.500 0v5M15 0v5M20.500 0v5M26 0v5" stroke="#2a87ad" strokeWidth="2" />
        </svg>
      </TaskIcon>
      <TaskIcon dot>
        <svg viewBox="0 0 36 36" className={svg36}>
          <path d="M2 0h19l9 8v27H2z" fill="#f4f4f4" />
          <path d="M6 5h12M6 10h18M6 15h14M6 20h10M6 25h8M6 30h12" stroke="#c4c4c4" strokeWidth="1.500" strokeDasharray="3 1" />
          <path d="M20 18q0-5 5-5t5 4v6h-7q-3 0-3 5h-3q-2-10 3-10z" fill="#3474a9" />
          <path d="M30 18h3q3 8-1 10l-3 1q0 4-4 4t-4-4v-3q0-2 2-2h6z" fill="#ffd140" />
        </svg>
      </TaskIcon>
      <div className="relative ml-[3px] mt-px flex h-[60px] w-[60px] items-center justify-center rounded-[6px] border border-[#3a3a3a] bg-[#2d2d2d]">
        <ChromeLogo />
        <span className="absolute left-[31px] top-[4px] flex h-[24px] w-[24px] items-center justify-center rounded-full bg-[#5c6bc0] text-[13px]">Y</span>
        <span className="absolute bottom-0 left-[17px] h-[5px] w-[25px] rounded-full bg-[#1ff3fb]" />
      </div>
      <svg viewBox="0 0 18 10" className="ml-auto h-[10px] w-[18px]">
        <path d="m.5 9.500 8.500-8 8.500 8" fill="none" stroke="#fff" strokeWidth="1.400" />
      </svg>
      <div className="ml-[20px] w-[44px] text-center text-[17px] leading-[23px] tracking-[-0.2px]">
        ENG
        <br />
        IN
      </div>
      <svg viewBox="0 0 24 18" className="ml-[23px] h-[18px] w-[25px]">
        <path d="M1 7q11-11 22 0M4.500 10.500q7.500-8 15 0M8 14q4-4.500 8 0" fill="none" stroke="#fff" strokeWidth="1.700" />
        <circle cx="12" cy="15.500" r="2" fill="#fff" />
      </svg>
      <svg viewBox="0 0 24 20" className="ml-[11px] h-[20px] w-[25px]">
        <path d="M1 7h4l5-5v16l-5-5H1z" fill="none" stroke="#fff" strokeWidth="1.500" />
        <path d="M13 7q2 3 0 6M16 4q4 6 0 12M19 1q6 9 0 18" fill="none" stroke="#fff" strokeWidth="1.500" />
      </svg>
      <svg viewBox="0 0 24 20" className="ml-[11px] h-[20px] w-[24px]">
        <path d="M8 3.500h10.500q2 0 2 2v9q0 2-2 2H10" fill="none" stroke="#fff" strokeWidth="1.600" />
        <path d="M21 8h2.500v4H21zM0 3h8v4q0 3-3 3H3Q0 10 0 7z" fill="#fff" />
        <path d="M2 0v4M6 0v4M4 9v9M7.500 12v5.500" stroke="#fff" strokeWidth="1.600" />
      </svg>
      <div className="ml-[17px] w-[90px] whitespace-nowrap text-right text-[16.500px] leading-[23px]">
        15:40
        <br />
        19-11-2022
      </div>
      <span className="ml-[11px] flex h-[24px] w-[24px] items-center justify-center rounded-full bg-[#1ff3fb] text-[15px] text-black">6</span>
      <span className="ml-[20px] mr-[7px] h-[24px] w-[2px] bg-[#8c8c8c]" />
    </div>
  );
}

export default function App() {
  return (
    <div className="relative flex h-[1080px] w-[1920px] flex-col overflow-hidden bg-white">
      <Defs />
      <TabStrip />
      <Toolbar />
      <div className="h-[2px] shrink-0 bg-[#ccc]" />
      <div className="flex h-[901px] shrink-0 overflow-hidden">
        <main className={`${ROBOTO} flex w-[1895px] shrink-0 flex-col overflow-hidden bg-[#e7e7e7] bg-[repeating-linear-gradient(0deg,rgba(0,0,0,0.012)_0_1px,transparent_1px_3px,rgba(255,255,255,0.18)_3px_4px,transparent_4px_7px),repeating-linear-gradient(90deg,rgba(0,0,0,0.012)_0_1px,transparent_1px_4px,rgba(255,255,255,0.18)_4px_5px,transparent_5px_9px)]`}>
          <Header />
          <ProjectBar />
          <div className="mt-[9px] flex items-start">
            <PalettePanel />
            <ViewerPanel />
            <ComponentsColumn />
            <PropertiesPanel />
          </div>
        </main>
        <div className="flex w-[25px] flex-col items-center bg-[#f1f1f1] pb-[5px] pt-[7px]">
          <Arrow dir="up" />
          <div className="mt-[6px] h-[599px] w-[21px] bg-[#c1c1c1]" />
          <span className="mt-auto">
            <Arrow dir="down" dark />
          </span>
        </div>
      </div>
      <Taskbar />
      <div className={`${SEGOE} absolute left-[1776px] top-[943px] flex h-[47px] w-[144px] items-center justify-center rounded-[6px] border border-[#8a8a8a] bg-[#2b2b2b] text-[17.500px] text-white`}>
        Show desktop
      </div>
    </div>
  );
}
